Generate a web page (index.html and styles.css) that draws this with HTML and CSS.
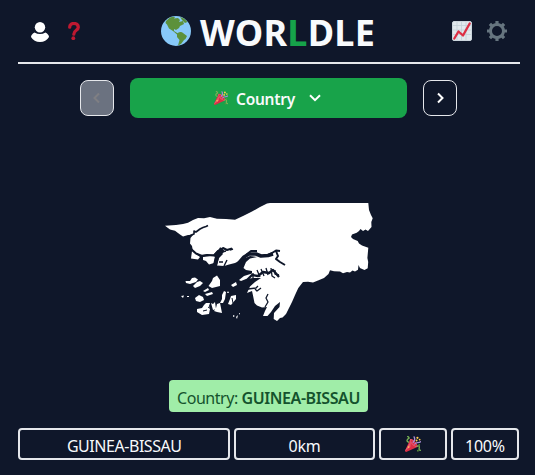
FILE: index.html
```html
<!DOCTYPE html>
<html lang="en">
<head>
<meta charset="utf-8">
<title>Worldle</title>
<link rel="stylesheet" href="styles.css">
</head>
<body>
<svg width="0" height="0" class="defs">
  <symbol id="party" viewBox="0 0 36 36">
    <path fill="#dd2e44" d="M11.6 7.6c-.2.2-.3.3-.4.6L.1 33.3c-.4 1.2 1.2 2.900 2.500 2.500L27.800 24.600c2-2-.5-7.500-5.500-12.500S13.500 5.700 11.600 7.600z"/>
    <path fill="#ea596e" d="M13 12L.5 32 .1 34l12-9zM22 13c5 5 7 10 5.500 11.500S20 23 15.500 18.500 10 9 11.500 7.500 17 8 22 13z"/>
    <path fill="#dd2e44" d="M22 14c4 4 6 8 5 9s-5-1-9-5-6-8-5-9 5 1 9 5z"/>
    <g fill="none" stroke-width="3" stroke-linecap="round">
      <path stroke="#aa8dd8" d="M18.500 14c4-4 4-8 2-12M22 18c4-6 8-1 13-5"/>
      <path stroke="#77b255" d="M27 23c4-2 6 0 5 4s1 6 3 5M8 14C2 12 5 7 8 6S8 2 6 1"/>
    </g>
    <g fill="#ffcc4d"><circle cx="28" cy="4" r="2.500"/><circle cx="33" cy="8" r="2"/><circle cx="26" cy="10" r="2.300"/><circle cx="8" cy="25" r="1.800"/></g>
    <g fill="#5c913b"><circle cx="32" cy="20" r="2"/><circle cx="29" cy="33" r="2"/></g>
  </symbol>
</svg>
<main class="app">
  <header class="header">
    <div class="tools">
      <svg class="person" viewBox="0 0 18 20"><circle cx="9" cy="5.200" r="5.200"/><path d="M3.500 10.500Q9 13.500 14.500 10.500Q18 12.500 18 15Q15 20 9 20T0 15Q0 12.500 3.500 10.500z"/></svg>
      <svg class="question" viewBox="0 0 12 18"><path d="M1.700 5.200C1.700 0 10.300.3 10.300 5.200C10.300 8.500 5.800 8 5.800 12.200"/><circle cx="5.300" cy="16.200" r="1.900"/></svg>
    </div>
    <h1 class="title">
      <svg class="globe" viewBox="0 0 30 30"><circle class="sea" cx="15" cy="15" r="15"/><path d="M5 5L9 1.500Q12 .5 14 1L13 2.500L17 2L19 4L18 6L22 5L23 8L19 10L18 12L15 14L13 13L13 15L17 17.500L16 18.500L12 15L8 12.500L6 8.500L4.500 7z"/><path d="M16 17.500Q20 15 22 17L26 20Q25 23 23 24L20 28L17 29.500L18.500 24L16 21z"/><path d="M19 .8L23 2.500L26.500 6L24 7L21 4z"/></svg>
      <span class="word">WOR<b>L</b>DLE</span>
    </h1>
    <div class="tools right">
      <svg class="chart" viewBox="0 0 20 20"><rect x=".5" y=".5" width="19" height="19" rx="1.500" fill="#e1e8ed" stroke="#ccd6dd"/><path d="M1 4.500H19M1 9H19M1 13.500H19M5 1V19M9.500 1V19M14 1V19" stroke="#c3cfd7" stroke-width=".8"/><path d="M2.300 17.500L6.500 10.500L11 14.500L17.700 2.500" fill="none" stroke="#dd2e44" stroke-width="2.300" stroke-linecap="round" stroke-linejoin="round"/></svg>
      <svg class="gear" viewBox="0 0 20 20"><circle cx="10" cy="10" r="6.500" fill="none" stroke-width="3"/><path d="M10 0V4M10 16V20M0 10H4M16 10H20M2.900 2.900L5.500 5.500M14.500 14.500L17.100 17.100M2.900 17.100L5.500 14.500M14.500 5.500L17.100 2.900" stroke-width="3.200"/></svg>
    </div>
  </header>
  <nav class="rounds">
    <button class="step disabled" aria-label="Previous"><svg viewBox="0 0 16 16"><path d="M10 3.500L5.500 8L10 12.500"/></svg></button>
    <button class="current"><svg class="party"><use href="#party"/></svg><span>Country</span><svg class="down" viewBox="0 0 12 8"><path d="M1 1.200L6 6.200L11 1.200"/></svg></button>
    <button class="step" aria-label="Next"><svg viewBox="0 0 16 16"><path d="M6 3.500L10.500 8L6 12.500"/></svg></button>
  </nav>
  <section class="map">
    <svg viewBox="160 195 220 130">
      <path class="land" d="M165 225.700L176 225L183 224L188 222.700L193 220L198 218L204 218.200L210 217L217 218.700L226 219L235 219.700L243 216L252 211.500L260 207L267 203.500L270 203H368.300L369 210L371 215L372.700 218.300L371.300 222L371.500 227L368 231L365.500 229.500L363 231L360.500 229L359 231L356.700 232.700L352 234.500L351 237L353 239L357.700 241L359 243.500L362 245.500L368.300 247.700L367.400 258L368.200 262L367.700 268.300L364.500 270L361 268.500L360 268L358.500 265L358 269.700L355 271.500L352.500 270.500L350 272.500L347 272L343 273.300L340 271.500L334 271.300L330 270.300L328.500 274L324 278L318 280.500L313 282.500L308 281.800L303 282L298.300 288L295.500 294L292 302L289 308L286 314L282.500 317.500L280 318L277 321L273.700 319L274 313L279.500 307L280 302L275 306L271 312L267.500 316L263 316L265 311L267 307L262 307.500L257 305.500L254.500 303L253 295.500L252 291L247 293L250 286.500L255 282L261 278L253 278L246 279L241 281L239 280L244 276L252 273.500L252 271L246 270L243.500 268L246 262L250 258.500L257 257L250 256L243 259L235 263L229 264.500L224 266L217 265.500L219 258L223 254L218 250L213.500 254.500L206 254.500L200 255L196 253L192.700 250L192 246L190 243.500L190.500 238L193 235L188 235L183 236.500L180 234.500L175 230.700L170 229.500z"/>
      <g class="land">
        <path d="M192 251L196 254L200 257L198 259.500L191 258.500z"/>
        <path d="M203 257L213 255.500L215 257L214 263L209 264.500L206 261L203 260z"/>
        <path d="M185.500 281L190 281L192 278L195 277.500L198 279.500L196 282L190 284L186 283z"/>
        <path d="M193 286L197 282L200 281L203 283L200 286L195 288z"/>
        <path d="M217 275.500L220 280L220 286L212 288L208.500 286L212 281L213 278z"/>
        <path d="M203 291L208 288L209 290L205 292zM205 294L212 292L213 294L207 296z"/>
        <path d="M195 298L199 295L203 297L204 300L200 302L196 301z"/>
        <path d="M197 309L202 308L204 305L206 303L210 303L209 306L210 309L209 314L202 315L197 312z"/>
        <path d="M211 303L213 304L215 302L216 309L213 310zM217 304L220 303L221 308L222 313L217 312L214 311L216 308z"/>
        <path d="M220 303L222 299L222 295L224 291L226 292L225 299L223 303zM228 304L230 299L231 296L236 295L236 299L231 305z"/>
        <path d="M231 285L236 282L237 285L233 287zM181 296L184 295.500L183 298zM187 296H189V297H187zM228 291L229 293L227 293zM233 315L235 316L233 317zM236 317L238 315L237 319zM239 313L240 313L239.500 315z"/>
      </g>
      <g class="water">
        <path stroke-width="1.600" d="M190 235.500L194 234L194 231L196 232L200 229L203 227.500L206 226.500L208 225.500"/>
        <path stroke-width="2" d="M191 249L196 253.500L202 256L207 255L214 255.500L218 251L223 248L227 250L232 248.500"/>
        <path stroke-width="4" d="M215 265L217 257L222 251L219 249"/>
        <path stroke-width="1.400" d="M222 252L226 251M224 266L227 260M219 262L223 262M230 250L233 249"/>
        <path stroke-width="3.600" d="M238 264L244 257L249 254L256 254L261 256L268 255.500L273 254"/>
        <path stroke-width="2" d="M246 255L251 251L257 251M266 256L272 253L276 250.500L280 251M276 251L278 256L276 259L280 262L285 265"/>
        <path stroke-width="2.300" d="M247 280L252 275L258 276L263 272L269 273L273 270L279 277"/>
        <path stroke-width="1.300" d="M253 273V278M257 270L260 277M261 269L264 276M266 268L268 275M271 268L272 276L275 278M275 270L275 274L279 275M248 289L256 288L258 286M255 289L257 291L261 288M265 307L268 302L266 298L268 294"/>
        <path stroke-width="1" d="M208 307L211 309M203 311L207 310M232 298L233 303"/>
      </g>
    </svg>
  </section>
  <p class="answer"><span>Country: <b>GUINEA-BISSAU</b></span></p>
  <div class="guess">
    <div class="cell name"><span>GUINEA-BISSAU</span></div>
    <div class="cell distance"><span>0km</span></div>
    <div class="cell"><svg class="party"><use href="#party"/></svg></div>
    <div class="cell"><span>100%</span></div>
  </div>
</main>
</body>
</html>
```
FILE: styles.css
```css
* { box-sizing: border-box; }
body { margin: 0; height: 475px; overflow: hidden; background: #0f172a; color: #f8fafc; font: 16px/24px "Noto Sans", "Open Sans", sans-serif; }
.defs { position: absolute; }
.app { width: 502px; margin-left: 18px; }
svg { display: block; flex: none; }
.header { height: 64px; display: flex; align-items: center; justify-content: space-between; border-bottom: 2px solid #e5e7eb; }
.tools { width: 90px; padding-left: 13px; display: flex; align-items: center; gap: 19px; }
.tools.right { justify-content: flex-end; gap: 15px; padding: 0 13px 0 0; }
.person { width: 18px; height: 20px; fill: #fff; margin-top: 2px; }
.question { width: 12px; height: 18px; fill: #be1931; }
.question path { fill: none; stroke: #be1931; stroke-width: 3.3; stroke-linecap: round; }
.chart, .gear { width: 20px; height: 20px; }
.gear { stroke: #66757f; }
.title { margin: 0; padding-right: 2px; display: flex; align-items: center; gap: 9px; font-size: 36px; line-height: 40px; font-weight: 700; }
.globe { width: 30px; height: 30px; fill: #5c913b; }
.globe .sea { fill: #88c9f9; }
.word { width: 175px; white-space: nowrap; padding-top: 3px; letter-spacing: .25px; }
.word b { color: #16a34a; font-weight: 700; }
.rounds { height: 40px; margin-top: 14px; display: flex; align-items: center; justify-content: center; gap: 16px; padding-right: 1px; }
button { font: inherit; color: inherit; padding: 0; }
.step { width: 34px; height: 36px; border: 1px solid #e5e7eb; border-radius: 8px; background: none; display: grid; place-items: center; }
.step svg { width: 16px; height: 16px; fill: none; stroke: #fff; stroke-width: 2; }
.step.disabled { background: #6b7280; }
.step.disabled svg { stroke: #7f7f83; }
.current { width: 277px; height: 40px; border: 0; border-radius: 8px; background: #18a34a; display: flex; align-items: center; justify-content: center; font-size: 15.5px; font-weight: 600; letter-spacing: -.25px; }
.current span { padding-top: 2px; }
.current .party { width: 14px; height: 14px; margin-right: 8px; }
.current .down { margin-right: 2px; }
.down { width: 12px; height: 8px; margin-left: 14px; fill: none; stroke: #fff; stroke-width: 2; }
.map { height: 262px; padding: 77px 0 0 142px; }
.map svg { width: 220px; height: 130px; }
.land { fill: #fff; }
.water { fill: none; stroke: #0f172a; stroke-linejoin: round; }
.answer { width: 199px; height: 32px; margin: 0 0 16px 151px; padding-top: 3px; border-radius: 4px; background: #a0eda8; color: #14532d; display: flex; align-items: center; justify-content: center; white-space: nowrap; letter-spacing: -.46px; }
.answer b { font-weight: 600; letter-spacing: -.4px; }
.guess { width: 501px; height: 32px; display: grid; grid-template-columns: repeat(7, minmax(0, 1fr)); gap: 4px; }
.cell { border: 2px solid #e5e7eb; border-radius: 4px; display: flex; align-items: center; justify-content: center; white-space: nowrap; letter-spacing: -.45px; }
.cell span { padding-top: 3px; }
.name { grid-column: span 3; }
.distance { grid-column: span 2; }
.distance, .cell:last-child { letter-spacing: -.25px; }
.cell .party { width: 16px; height: 16px; }
```
